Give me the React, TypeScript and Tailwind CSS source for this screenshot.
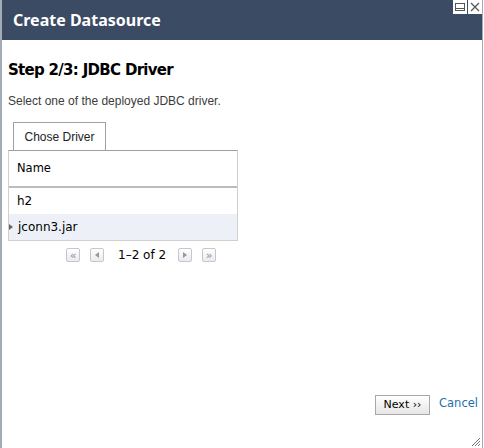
import React from "react";

function PagerButton({ children }: { children: React.ReactNode }) {
  return (
    <span className="flex h-[14px] w-[14px] items-center justify-center rounded-[2px] border border-[#c4c8ce] bg-gradient-to-b from-white to-[#e9ebee] text-[#8a8f96]">
      {children}
    </span>
  );
}

export default function App() {
  return (
    <div className="flex h-[448px] w-[484px] bg-white font-['Liberation_Sans',sans-serif]">
      <div className="relative flex flex-1 flex-col border-l-2 border-r border-l-[#a3abb6] border-r-[#a3abb6] bg-white mr-[1px]">
        <div className="relative flex h-[40px] items-center bg-[#3a4b63] pl-[11px]">
          <span className="font-['Noto_Sans',sans-serif] text-[16px] font-bold text-white">
            Create Datasource
          </span>
          <div className="absolute right-0 top-0 flex gap-[1px]">
            <span className="flex h-[14px] w-[14px] items-center justify-center bg-white">
              <svg width="12" height="10" viewBox="0 0 12 10">
                <rect x="1.5" y="1.5" width="9" height="7" fill="none" stroke="#555" />
                <line x1="2" y1="6.5" x2="10" y2="6.5" stroke="#555" />
              </svg>
            </span>
            <span className="flex h-[14px] w-[14px] items-center justify-center bg-white">
              <svg width="10" height="10" viewBox="0 0 10 10">
                <path d="M1 1 L9 9 M9 1 L1 9" stroke="#555" strokeWidth="1.2" />
              </svg>
            </span>
          </div>
        </div>

        <div className="flex flex-1 flex-col px-[6px]">
          <h2 className="mt-[21px] font-['DejaVu_Sans',sans-serif] text-[15px] font-bold leading-[18px] tracking-[-0.7px] text-black">
            Step 2/3: JDBC Driver
          </h2>
          <p className="mt-[15px] text-[12px] leading-[14px] text-[#3c3c3c]">Select one of the deployed JDBC driver.</p>

          <div className="mt-[14px] flex">
            <div className="ml-[5px] -mb-px flex h-[29px] w-[93px] items-center justify-center border border-b-0 border-[#a0a0a0] bg-white text-[12px] text-[#222]">
              Chose Driver
            </div>
          </div>
          <div className="w-[230px] border border-[#cfcfcf] border-t-[#a0a0a0] font-['DejaVu_Sans',sans-serif] text-[12px] text-black">
            <div className="flex h-[37px] items-center border-b-2 border-[#bcbcbc] pl-[8px] text-[11.5px]">Name</div>
            <div className="flex h-[26px] items-center pl-[8px]">h2</div>
            <div className="relative flex h-[26px] items-center bg-[#edf1f7] pl-[9px]">
              <span className="absolute left-0 top-[10px] h-0 w-0 border-y-[3px] border-l-[4px] border-y-transparent border-l-[#666]" />
              jconn3.jar
            </div>
          </div>
          <div className="mt-[5px] flex items-center pl-[58px] font-['DejaVu_Sans',sans-serif] text-[12px] text-black">
            <PagerButton>
              <span className="text-[11px] leading-none">«</span>
            </PagerButton>
            <span className="ml-[10px]">
              <PagerButton>
                <span className="h-0 w-0 border-y-[3px] border-r-[4px] border-y-transparent border-r-[#999]" />
              </PagerButton>
            </span>
            <span className="ml-[14px] mr-[12px]">1–2 of 2</span>
            <PagerButton>
              <span className="h-0 w-0 border-y-[3px] border-l-[4px] border-y-transparent border-l-[#999]" />
            </PagerButton>
            <span className="ml-[10px]">
              <PagerButton>
                <span className="text-[11px] leading-none">»</span>
              </PagerButton>
            </span>
          </div>

          <div className="mt-auto mb-[33px] -mr-[2px] flex items-center justify-end gap-[9px]">
            <button className="h-[20px] w-[55px] border border-[#a8a8a8] bg-gradient-to-b from-white to-[#e6e6e6] font-['DejaVu_Sans',sans-serif] text-[11px] text-black">
              Next ››
            </button>
            <span className="-mt-[2px] font-['DejaVu_Sans',sans-serif] text-[11.5px] text-[#1f6fa8]">Cancel</span>
          </div>
        </div>

        <svg className="absolute bottom-[1px] right-[1px]" width="11" height="11" viewBox="0 0 11 11">
          <path d="M10 2 L2 10 M10 5 L5 10 M10 8 L8 10" stroke="#777" strokeWidth="1" />
        </svg>
      </div>
    </div>
  );
}
